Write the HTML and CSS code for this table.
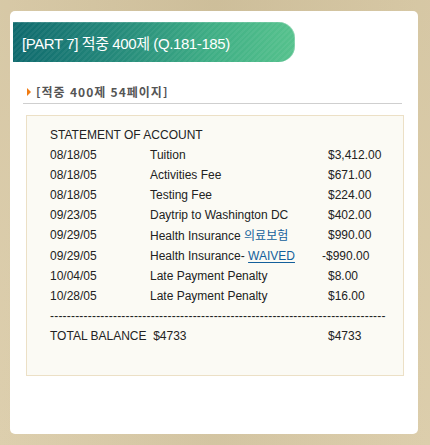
FILE: index.html
```html
<!DOCTYPE html>
<html lang="ko">
<head>
<meta charset="utf-8">
<link rel="stylesheet" href="styles.css">
</head>
<body>
<div class="card">
  <div class="title-bar"><span class="title">[PART 7] 적중 400제 (Q.181-185)</span></div>
  <div class="sub">
    <span class="tri"></span>
    <span class="sub-text">[적중 400제 54페이지]</span>
  </div>
  <div class="box">
    <div class="line">STATEMENT OF ACCOUNT</div>
    <div class="row"><span class="d">08/18/05</span><span class="t">Tuition</span><span class="a">$3,412.00</span></div>
    <div class="row"><span class="d">08/18/05</span><span class="t">Activities Fee</span><span class="a">$671.00</span></div>
    <div class="row"><span class="d">08/18/05</span><span class="t">Testing Fee</span><span class="a">$224.00</span></div>
    <div class="row"><span class="d">09/23/05</span><span class="t">Daytrip to Washington DC</span><span class="a">$402.00</span></div>
    <div class="row"><span class="d">09/29/05</span><span class="t">Health Insurance <span class="kr">의료보험</span></span><span class="a">$990.00</span></div>
    <div class="row"><span class="d">09/29/05</span><span class="t">Health Insurance- <span class="link">WAIVED</span></span><span class="a neg">-$990.00</span></div>
    <div class="row"><span class="d">10/04/05</span><span class="t">Late Payment Penalty</span><span class="a">$8.00</span></div>
    <div class="row"><span class="d">10/28/05</span><span class="t">Late Payment Penalty</span><span class="a">$16.00</span></div>
    <div class="line dashes">--------------------------------------------------------------------------------</div>
    <div class="row"><span class="total">TOTAL BALANCE&nbsp;&nbsp;$4733</span><span class="a">$4733</span></div>
  </div>
</div>
</body>
</html>
```
FILE: styles.css
```css
html, body {
  margin: 0;
  padding: 0;
}
body {
  width: 430px;
  height: 445px;
  overflow: hidden;
  background-color: #d8c8a2;
  background-image:
    linear-gradient(90deg, rgba(255,255,255,0.08), rgba(0,0,0,0.03) 50%, rgba(255,255,255,0.06)),
    linear-gradient(180deg, rgba(0,0,0,0.02), rgba(255,255,255,0.05));
  padding: 11px 0 0 10px;
  box-sizing: border-box;
  font-family: "Liberation Sans", "Noto Sans CJK KR", sans-serif;
}
.card {
  width: 408px;
  height: 423px;
  background: #fff;
  border-radius: 5px;
  padding-top: 11px;
  box-sizing: border-box;
}
.title-bar {
  margin-left: 3px;
  width: 282px;
  height: 40px;
  box-sizing: border-box;
  border-radius: 0 16px 16px 0;
  background-image:
    repeating-linear-gradient(135deg, rgba(255,255,255,0.05) 0 2px, rgba(255,255,255,0) 2px 4px),
    linear-gradient(90deg, #0f6a6e 0%, #24887a 35%, #3fae85 70%, #56c28d 100%);
  box-shadow: inset -1px 0 0 rgba(255,255,255,0.25), inset 0 1px 0 rgba(255,255,255,0.15);
  display: flex;
  align-items: center;
  padding-left: 9px;
}
.title {
  color: #fff;
  font-size: 15px;
  letter-spacing: -0.4px;
}
.sub {
  margin: 20px 16px 0 13px;
  height: 22px;
  border-bottom: 1px solid #cfcfcf;
  display: flex;
  align-items: center;
  box-sizing: border-box;
  padding-bottom: 2px;
}
.tri {
  width: 0;
  height: 0;
  border-left: 4px solid #f07b12;
  border-top: 4px solid transparent;
  border-bottom: 4px solid transparent;
  margin-left: 4px;
  margin-right: 5px;
}
.sub-text {
  font-family: "Noto Sans CJK KR", sans-serif;
  font-weight: bold;
  font-size: 12px;
  color: #555;
  letter-spacing: 1px;
}
.box {
  margin: 11px 0 0 16px;
  width: 378px;
  height: 261px;
  box-sizing: border-box;
  background: #fbfaf4;
  border: 1px solid #ece0c6;
  padding: 9px 0 0 23px;
  font-size: 12px;
  color: #222;
  line-height: 20px;
}
.line {
  white-space: nowrap;
}
.dashes {
  letter-spacing: 0.2px;
}
.row {
  display: flex;
  white-space: nowrap;
}
.d {
  width: 100px;
}
.t {
  width: 178px;
}
.total {
  width: 278px;
}
.kr {
  font-family: "Noto Sans CJK KR", sans-serif;
  color: #135f9b;
}
.link {
  color: #135f9b;
  text-decoration: underline;
  text-underline-offset: 2px;
}
.neg {
  margin-left: -6px;
}
```
